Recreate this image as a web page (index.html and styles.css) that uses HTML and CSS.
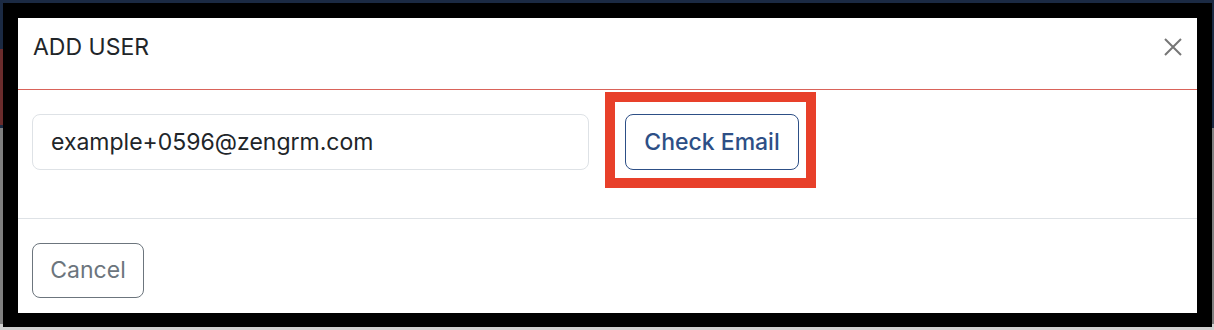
FILE: index.html
```html
<!DOCTYPE html>
<html lang="en">
<head>
<meta charset="utf-8">
<title>Add User</title>
<link rel="stylesheet" href="styles.css">
</head>
<body>
  <div class="page">
    <div class="page-nav">
      <div class="page-accent"></div>
    </div>
    <div class="page-main"></div>
    <div class="page-table-head"></div>
  </div>

  <div class="frame">
    <div class="modal">
      <div class="modal-header">
        <h5 class="modal-title">ADD USER</h5>
        <button class="btn-close" type="button" aria-label="Close">
          <svg viewBox="0 0 18 18" width="18" height="18" aria-hidden="true">
            <path d="M1 1 L17 17 M17 1 L1 17" stroke="#767676" stroke-width="2" fill="none" stroke-linecap="butt"/>
          </svg>
        </button>
      </div>
      <div class="modal-body">
        <input class="email-input" type="email" value="example+0596@zengrm.com">
        <div class="highlight">
          <button class="btn btn-primary-outline" type="button">Check Email</button>
        </div>
      </div>
      <div class="modal-footer">
        <button class="btn btn-secondary-outline" type="button">Cancel</button>
      </div>
    </div>
  </div>
</body>
</html>
```

FILE: styles.css
```css
* { box-sizing: border-box; }

html, body {
  margin: 0;
  padding: 0;
}

body {
  width: 1214px;
  height: 330px;
  overflow: hidden;
  font-family: "Inter", "Liberation Sans", sans-serif;
  background: #808080;
}

.page {
  display: flex;
  flex-direction: column;
  height: 330px;
}

.page-nav {
  height: 128px;
  background: #1b2a43;
  padding-top: 49px;
}

.page-accent {
  width: 20px;
  height: 76px;
  background: #6b2c2c;
}

.page-main {
  flex: 1;
  background: #808080;
}

.page-table-head {
  height: 6px;
  background: #cfcfcf;
}

.frame {
  position: absolute;
  left: 3px;
  top: 3px;
  width: 1209px;
  height: 324px;
  background: #000;
  padding: 15px 15px 14px 15px;
}

.modal {
  width: 1179px;
  height: 295px;
  background: #fff;
  overflow: hidden;
}

.modal-header {
  height: 72px;
  display: flex;
  align-items: flex-start;
  justify-content: space-between;
  padding: 16px 15px 0 15px;
  border-bottom: 1px solid #d9635a;
}

.modal-title {
  margin: 0;
  font-size: 23px;
  font-weight: 400;
  line-height: 1.2;
  color: #212529;
}

.btn-close {
  width: 18px;
  height: 18px;
  padding: 0;
  border: 0;
  background: transparent;
  display: flex;
  margin-top: 4px;
}

.modal-body {
  height: 129px;
  display: flex;
  align-items: flex-start;
  gap: 16px;
  padding: 2px 0 0 14px;
  border-bottom: 1px solid #dee2e6;
}

.email-input {
  width: 557px;
  height: 56px;
  margin-top: 22px;
  padding: 0 18px;
  border: 1px solid #dee2e6;
  border-radius: 8px;
  font-family: inherit;
  font-size: 23px;
  color: #212529;
  background: #fff;
  outline: none;
}

.highlight {
  display: flex;
  border: 10px solid #e8402a;
  padding: 12px 7px 8px 10px;
}

.btn {
  height: 56px;
  border-radius: 8px;
  background: #fff;
  font-family: inherit;
  font-size: 23px;
  line-height: 1;
  padding: 0;
  cursor: pointer;
}

.btn-primary-outline {
  width: 174px;
  border: 1px solid #2d4f86;
  color: #2d4f86;
  font-weight: 500;
}

.modal-footer {
  display: flex;
  padding: 24px 14px;
}

.btn-secondary-outline {
  width: 112px;
  height: 55px;
  border: 1px solid #6c757d;
  color: #6c757d;
  font-weight: 400;
}
```
